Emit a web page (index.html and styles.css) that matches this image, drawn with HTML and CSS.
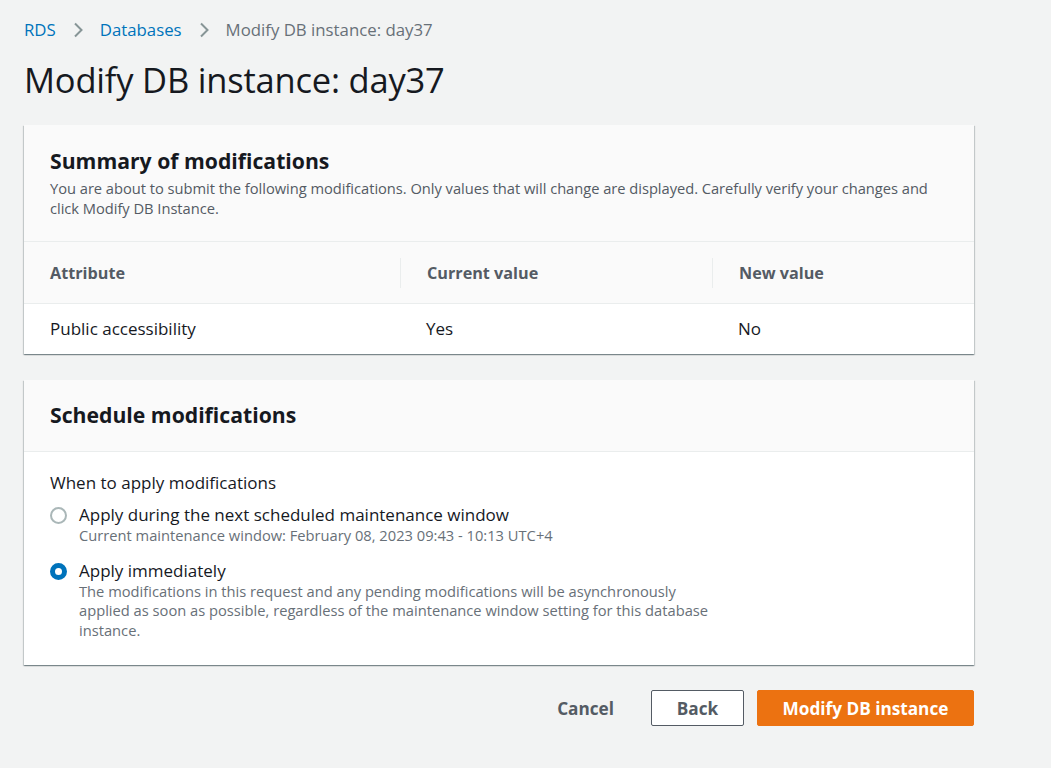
FILE: index.html
```html
<!DOCTYPE html>
<html>
<head>
<meta charset="utf-8">
<link rel="stylesheet" href="styles.css">
</head>
<body>
<div class="page">
  <nav class="crumbs">
    <a class="crumb-link">RDS</a>
    <svg class="chev" viewBox="0 0 16 16" width="16" height="16"><path d="M5 1.5l6.5 6.5-6.5 6.5" fill="none" stroke="#879596" stroke-width="2"/></svg>
    <a class="crumb-link">Databases</a>
    <svg class="chev" viewBox="0 0 16 16" width="16" height="16"><path d="M5 1.5l6.5 6.5-6.5 6.5" fill="none" stroke="#879596" stroke-width="2"/></svg>
    <span class="crumb-current">Modify DB instance: day37</span>
  </nav>
  <h1 class="title">Modify DB instance: day37</h1>

  <section class="card">
    <div class="card-head tall">
      <h2 class="card-title">Summary of modifications</h2>
      <p class="card-desc">You are about to submit the following modifications. Only values that will change are displayed. Carefully verify your changes and click Modify DB Instance.</p>
    </div>
    <div class="table">
      <div class="thead">
        <div class="th"><span>Attribute</span></div>
        <div class="th sep"><span>Current value</span></div>
        <div class="th sep"><span>New value</span></div>
      </div>
      <div class="trow">
        <div class="td">Public accessibility</div>
        <div class="td">Yes</div>
        <div class="td">No</div>
      </div>
    </div>
  </section>

  <section class="card">
    <div class="card-head">
      <h2 class="card-title">Schedule modifications</h2>
    </div>
    <div class="card-body">
      <div class="field-label">When to apply modifications</div>
      <div class="radio-row">
        <span class="radio"></span>
        <div class="radio-text">
          <div class="radio-label">Apply during the next scheduled maintenance window</div>
          <div class="radio-desc">Current maintenance window: February 08, 2023 09:43 - 10:13 UTC+4</div>
        </div>
      </div>
      <div class="radio-row">
        <span class="radio checked"></span>
        <div class="radio-text">
          <div class="radio-label">Apply immediately</div>
          <div class="radio-desc narrow">The modifications in this request and any pending modifications will be asynchronously applied as soon as possible, regardless of the maintenance window setting for this database instance.</div>
        </div>
      </div>
    </div>
  </section>

  <div class="actions">
    <button class="btn link">Cancel</button>
    <button class="btn normal">Back</button>
    <button class="btn primary">Modify DB instance</button>
  </div>
</div>
</body>
</html>
```

FILE: styles.css
```css
* { box-sizing: border-box; }
html, body { margin: 0; padding: 0; }
body {
  background: #f2f3f3;
  font-family: "Open Sans", "Noto Sans", Arial, sans-serif;
  color: #16191f;
  width: 1051px;
  height: 768px;
  overflow: hidden;
}
.page {
  width: 950px;
  margin-left: 24px;
  padding-top: 18px;
}
.crumbs {
  display: flex;
  align-items: center;
  gap: 14px;
  font-size: 16.8px;
  line-height: 24px;
}
.crumb-link { color: #0073bb; }
.crumb-current { color: #687078; }
.chev { display: block; }
.title {
  font-size: 34.5px;
  font-weight: 400;
  line-height: 42px;
  margin: 17px 0 24px;
  letter-spacing: -0.2px;
}
.card {
  background: #fff;
  box-shadow: 0 1px 1px 0 rgba(0,28,36,.3), 1px 1px 1px 0 rgba(0,28,36,.15), -1px 1px 1px 0 rgba(0,28,36,.15);
  margin-bottom: 26px;
}
.card-head {
  background: #fafafa;
  padding: 20px 26px 21px;
  border-bottom: 1px solid #eaeded;
}
.card-head.tall { padding: 21px 26px 23px; }
.card-title {
  margin: 0;
  font-size: 21.2px;
  font-weight: 700;
  line-height: 30px;
}
.card-desc {
  margin: 2px 0 0;
  font-size: 14.7px;
  line-height: 20px;
  color: #545b64;
  letter-spacing: -0.03px;
}
.thead {
  display: grid;
  grid-template-columns: 376px 312px 1fr;
  background: #fafafa;
  border-bottom: 1px solid #eaeded;
  height: 62px;
  align-items: center;
}
.th {
  font-size: 16.2px;
  font-weight: 700;
  color: #545b64;
  padding-left: 26px;
  height: 30px;
  display: flex;
  align-items: center;
}
.th.sep { border-left: 1px solid #eaeded; }
.trow {
  display: grid;
  grid-template-columns: 376px 312px 1fr;
  height: 50px;
  align-items: center;
  padding-bottom: 2px;
}
.td {
  font-size: 17px;
  padding-left: 26px;
}
.card-body {
  padding: 20px 26px 25px;
}
.field-label {
  font-size: 17px;
  line-height: 22px;
  margin-bottom: 10px;
}
.radio-row {
  display: flex;
  align-items: flex-start;
  gap: 12px;
  margin-bottom: 14px;
}
.radio-row:last-child { margin-bottom: 0; }
.radio {
  width: 17px;
  height: 17px;
  border-radius: 50%;
  border: 2px solid #aab7b8;
  margin-top: 3px;
  flex: none;
  background: #fff;
}
.radio.checked {
  border: 5px solid #0073bb;
}
.radio-label {
  font-size: 17px;
  line-height: 22px;
}
.radio-desc {
  font-size: 14.7px;
  line-height: 19.5px;
  color: #687078;
}
.radio-desc.narrow { max-width: 632px; }
.actions {
  display: flex;
  justify-content: flex-end;
  align-items: center;
  gap: 13px;
  margin-top: -1px;
}
.btn {
  font-family: inherit;
  font-size: 17.2px;
  font-weight: 700;
  height: 36px;
  border-radius: 2px;
  cursor: pointer;
}
.btn.link {
  background: none;
  border: none;
  color: #545b64;
  padding: 0 24px;
}
.btn.normal {
  background: #fff;
  border: 1px solid #545b64;
  color: #545b64;
  width: 93px;
}
.btn.primary {
  background: #ec7211;
  border: 1px solid #ec7211;
  color: #fff;
  width: 217px;
}
```
